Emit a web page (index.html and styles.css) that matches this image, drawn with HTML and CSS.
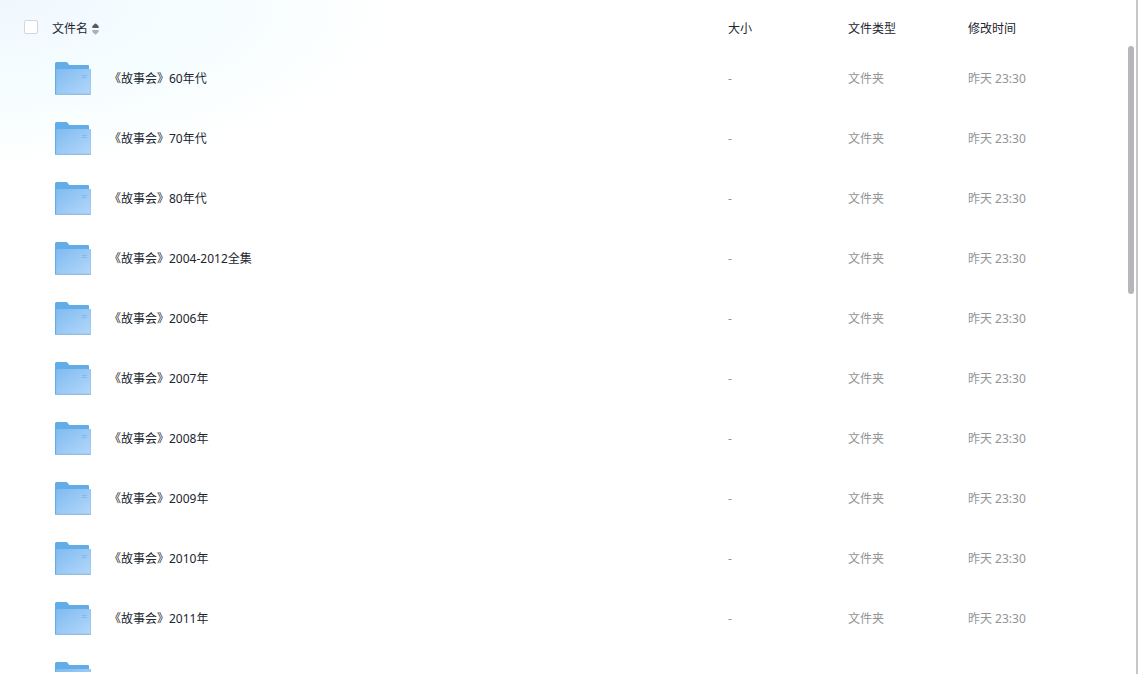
FILE: index.html
```html
<!DOCTYPE html>
<html lang="zh-CN">
<head>
    <meta charset="UTF-8">
    <meta name="viewport" content="width=device-width, initial-scale=1.0">
    <title>文件名</title>
    <link rel="stylesheet" href="styles.css">
</head>
<body>
    <!--文件夹图标-->
    <svg class="defs" width="0" height="0" aria-hidden="true">
        <defs>
            <linearGradient id="front" x1="0" y1="0" x2="1" y2="1">
                <stop offset="0" stop-color="#7fbbf0"/>
                <stop offset="1" stop-color="#b3d7fa"/>
            </linearGradient>
            <symbol id="folder" viewBox="0 0 36 33">
                <path fill="#62ade7" d="M0 1.5Q0 0 1.5 0H11Q12.2 0 12.8 1L13.8 2.5Q14.3 3 15.2 3H33Q34 3 34 4V33H1Q0 33 0 32Z"/>
                <path fill="#95bfe4" d="M1.5 8Q1.5 7 2.5 7H35Q36 7 36 8V32Q36 33 35 33H1Z"/>
                <path fill="url(#front)" d="M1.5 8Q1.5 7 2.5 7H34.5Q35.5 7 35.5 8V31.5H1.5Z"/>
                <path stroke="#7eb4e6" stroke-width="0.8" d="M27 13.5H32M27 15.5H32"/>
            </symbol>
        </defs>
    </svg>
    <div class="files">
        <!--文件列表-->
        <table class="list">
            <thead>
                <tr>
                    <th class="name">
                        <div class="head">
                            <input type="checkbox" class="check" aria-label="文件名">
                            <button type="button" class="sort">文件名
                                <svg width="7" height="12" viewBox="0 0 7 12" aria-hidden="true">
                                    <path fill="#565b63" d="M2.8 .8Q3.5 .2 4.2 .8L6.5 3Q7.3 5 6 5H1Q-.3 5 .5 3Z"/>
                                    <path fill="#adb0b5" d="M2.8 11.2Q3.5 11.8 4.2 11.2L6.5 9Q7.3 7 6 7H1Q-.3 7 .5 9Z"/>
                                </svg>
                            </button>
                        </div>
                    </th>
                    <th class="size">大小</th>
                    <th class="type">文件类型</th>
                    <th class="time">修改时间</th>
                </tr>
            </thead>
            <tbody>
                <tr>
                    <td><a href="#" class="file"><svg class="icon"><use href="#folder"/></svg><span>《故事会》60年代</span></a></td>
                    <td class="info">-</td>
                    <td class="info">文件夹</td>
                    <td class="info">昨天 23:30</td>
                </tr>
                <tr>
                    <td><a href="#" class="file"><svg class="icon"><use href="#folder"/></svg><span>《故事会》70年代</span></a></td>
                    <td class="info">-</td>
                    <td class="info">文件夹</td>
                    <td class="info">昨天 23:30</td>
                </tr>
                <tr>
                    <td><a href="#" class="file"><svg class="icon"><use href="#folder"/></svg><span>《故事会》80年代</span></a></td>
                    <td class="info">-</td>
                    <td class="info">文件夹</td>
                    <td class="info">昨天 23:30</td>
                </tr>
                <tr>
                    <td><a href="#" class="file"><svg class="icon"><use href="#folder"/></svg><span>《故事会》2004-2012全集</span></a></td>
                    <td class="info">-</td>
                    <td class="info">文件夹</td>
                    <td class="info">昨天 23:30</td>
                </tr>
                <tr>
                    <td><a href="#" class="file"><svg class="icon"><use href="#folder"/></svg><span>《故事会》2006年</span></a></td>
                    <td class="info">-</td>
                    <td class="info">文件夹</td>
                    <td class="info">昨天 23:30</td>
                </tr>
                <tr>
                    <td><a href="#" class="file"><svg class="icon"><use href="#folder"/></svg><span>《故事会》2007年</span></a></td>
                    <td class="info">-</td>
                    <td class="info">文件夹</td>
                    <td class="info">昨天 23:30</td>
                </tr>
                <tr>
                    <td><a href="#" class="file"><svg class="icon"><use href="#folder"/></svg><span>《故事会》2008年</span></a></td>
                    <td class="info">-</td>
                    <td class="info">文件夹</td>
                    <td class="info">昨天 23:30</td>
                </tr>
                <tr>
                    <td><a href="#" class="file"><svg class="icon"><use href="#folder"/></svg><span>《故事会》2009年</span></a></td>
                    <td class="info">-</td>
                    <td class="info">文件夹</td>
                    <td class="info">昨天 23:30</td>
                </tr>
                <tr>
                    <td><a href="#" class="file"><svg class="icon"><use href="#folder"/></svg><span>《故事会》2010年</span></a></td>
                    <td class="info">-</td>
                    <td class="info">文件夹</td>
                    <td class="info">昨天 23:30</td>
                </tr>
                <tr>
                    <td><a href="#" class="file"><svg class="icon"><use href="#folder"/></svg><span>《故事会》2011年</span></a></td>
                    <td class="info">-</td>
                    <td class="info">文件夹</td>
                    <td class="info">昨天 23:30</td>
                </tr>
                <tr>
                    <td><a href="#" class="file"><svg class="icon"><use href="#folder"/></svg></a></td>
                    <td></td>
                    <td></td>
                    <td></td>
                </tr>
            </tbody>
        </table>
        <!--滚动条-->
        <div class="bar"></div>
    </div>
</body>
</html>
```

FILE: styles.css
```css
*{
    margin: 0;
    padding: 0;
    box-sizing: border-box;
}
body{
    height: 100vh;
    padding-bottom: 2px;
    overflow: hidden;
    border-right: 2px solid #c4c6ca;
    background: radial-gradient(ellipse 400px 170px at 0 0, #f0f8ff 0%, #f5fdff 50%, #fff 100%) #fff;
    font: 12px/18px "Noto Sans", "Noto Sans CJK SC", sans-serif;
    color: #21252e;
}
.defs{
    position: absolute;
}
.files{
    position: relative;
    height: 100%;
    overflow: hidden;
}
.list{
    width: 100%;
    table-layout: fixed;
    border-collapse: collapse;
}
.list th{
    height: 48px;
    padding-top: 10px;
    font-weight: normal;
    text-align: left;
}
.list .name{
    padding-top: 6px;
}
.list td{
    height: 60px;
}
.list .info{
    padding-top: 2px;
    color: #929498;
}
.size,
.type{
    width: 120px;
}
.time{
    width: 168px;
}
.head{
    display: flex;
    align-items: center;
    gap: 14px;
    padding-left: 24px;
}
.check{
    appearance: none;
    width: 14px;
    height: 14px;
    border: 1px solid #d4d7de;
    border-radius: 2px;
    background-color: #fff;
}
.sort{
    display: flex;
    align-items: center;
    gap: 4px;
    padding-top: 4px;
    border: none;
    background: none;
    font: inherit;
    color: inherit;
    cursor: pointer;
}
.file{
    display: flex;
    align-items: center;
    gap: 18px;
    padding-left: 55px;
    color: #21252e;
    text-decoration: none;
}
.file span{
    padding-top: 2px;
}
.icon{
    width: 36px;
    height: 33px;
}
.bar{
    position: absolute;
    top: 46px;
    right: 2px;
    width: 6px;
    height: 248px;
    border-radius: 3px;
    background-color: #b4b6bc;
}
```
